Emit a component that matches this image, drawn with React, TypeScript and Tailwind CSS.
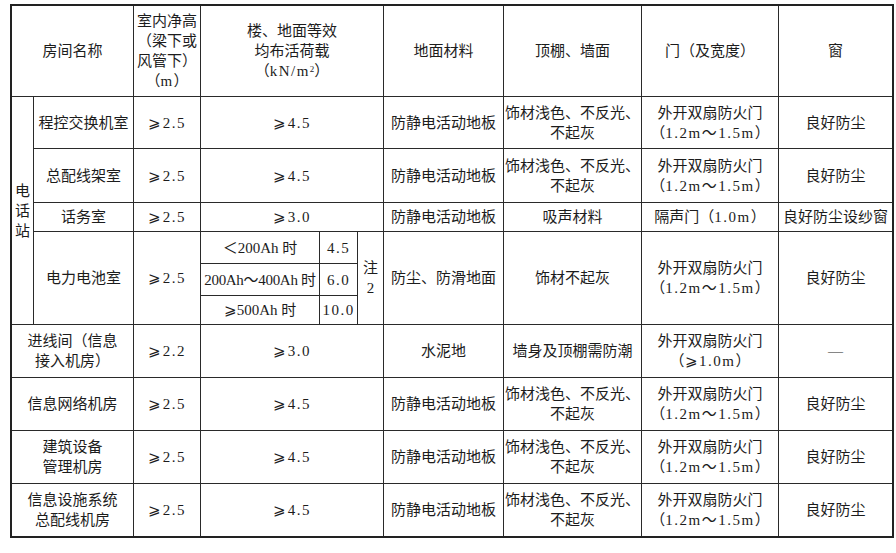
import type { ReactNode } from "react";

function Cell({ className = "", children }: { className?: string; children?: ReactNode }) {
  return (
    <div className={`flex items-center justify-center bg-white text-center leading-[20px] ${className}`}>
      <div>{children}</div>
    </div>
  );
}

// digits in the printed table are set wide, like "2. 5"
function Num({ children }: { children: ReactNode }) {
  return <span className="tracking-[1.5px]">{children}</span>;
}

const wall = (
  <>
    饰材浅色、不反光、
    <br />
    不起灰
  </>
);

const fireDoor = (
  <>
    外开双扇防火门
    <br />
    （<Num>1.2m～1.5m</Num>）
  </>
);

export default function App() {
  return (
    <div className="min-h-[553px] w-[896px] bg-white pl-[10px] pt-[4px] font-['Liberation_Serif','Noto_Sans_CJK_SC',serif] text-[15px] text-[#1c1c1c]">
      <div className="grid w-[884px] grid-cols-[21px_99px_66px_118px_37px_25px_119px_137px_136px_113px] grid-rows-[90px_51px_53px_28px_31px_31px_28px_52px_52px_52px_52px] gap-px border-2 border-[#222] bg-[#2a2a2a]">
        {/* header */}
        <Cell className="col-span-2">房间名称</Cell>
        <Cell>
          室内净高
          <br />
          （梁下或
          <br />
          风管下）
          <br />
          （<Num>m</Num>）
        </Cell>
        <Cell className="col-span-3">
          楼、地面等效
          <br />
          均布活荷载
          <br />
          （<Num>kN/m</Num>
          <sup className="text-[9px]">2</sup>）
        </Cell>
        <Cell>地面材料</Cell>
        <Cell>顶棚、墙面</Cell>
        <Cell>门（及宽度）</Cell>
        <Cell>窗</Cell>

        {/* 电话站 group */}
        <Cell className="row-span-6 leading-[18px]">
          电
          <br />
          话
          <br />
          站
        </Cell>
        <Cell>程控交换机室</Cell>
        <Cell><Num>⩾2.5</Num></Cell>
        <Cell className="col-span-3"><Num>⩾4.5</Num></Cell>
        <Cell>防静电活动地板</Cell>
        <Cell>{wall}</Cell>
        <Cell>{fireDoor}</Cell>
        <Cell>良好防尘</Cell>

        <Cell>总配线架室</Cell>
        <Cell><Num>⩾2.5</Num></Cell>
        <Cell className="col-span-3"><Num>⩾4.5</Num></Cell>
        <Cell>防静电活动地板</Cell>
        <Cell>{wall}</Cell>
        <Cell>{fireDoor}</Cell>
        <Cell>良好防尘</Cell>

        <Cell>话务室</Cell>
        <Cell><Num>⩾2.5</Num></Cell>
        <Cell className="col-span-3"><Num>⩾3.0</Num></Cell>
        <Cell>防静电活动地板</Cell>
        <Cell>吸声材料</Cell>
        <Cell>隔声门（<Num>1.0m</Num>）</Cell>
        <Cell className="whitespace-nowrap">良好防尘设纱窗</Cell>

        <Cell className="row-span-3">电力电池室</Cell>
        <Cell className="row-span-3"><Num>⩾2.5</Num></Cell>
        <Cell className="whitespace-nowrap">＜200Ah 时</Cell>
        <Cell><Num>4.5</Num></Cell>
        <Cell className="row-span-3">
          注
          <br />2
        </Cell>
        <Cell className="row-span-3">防尘、防滑地面</Cell>
        <Cell className="row-span-3">饰材不起灰</Cell>
        <Cell className="row-span-3">{fireDoor}</Cell>
        <Cell className="row-span-3">良好防尘</Cell>
        <Cell className="whitespace-nowrap tracking-[-0.3px]">200Ah～400Ah 时</Cell>
        <Cell><Num>6.0</Num></Cell>
        <Cell className="whitespace-nowrap">⩾500Ah 时</Cell>
        <Cell><Num>10.0</Num></Cell>

        {/* other rooms */}
        <Cell className="col-span-2">
          进线间（信息
          <br />
          接入机房）
        </Cell>
        <Cell><Num>⩾2.2</Num></Cell>
        <Cell className="col-span-3"><Num>⩾3.0</Num></Cell>
        <Cell>水泥地</Cell>
        <Cell>墙身及顶棚需防潮</Cell>
        <Cell>
          外开双扇防火门
          <br />
          （<Num>⩾1.0m</Num>）
        </Cell>
        <Cell>—</Cell>

        <Cell className="col-span-2">信息网络机房</Cell>
        <Cell><Num>⩾2.5</Num></Cell>
        <Cell className="col-span-3"><Num>⩾4.5</Num></Cell>
        <Cell>防静电活动地板</Cell>
        <Cell>{wall}</Cell>
        <Cell>{fireDoor}</Cell>
        <Cell>良好防尘</Cell>

        <Cell className="col-span-2">
          建筑设备
          <br />
          管理机房
        </Cell>
        <Cell><Num>⩾2.5</Num></Cell>
        <Cell className="col-span-3"><Num>⩾4.5</Num></Cell>
        <Cell>防静电活动地板</Cell>
        <Cell>{wall}</Cell>
        <Cell>{fireDoor}</Cell>
        <Cell>良好防尘</Cell>

        <Cell className="col-span-2">
          信息设施系统
          <br />
          总配线机房
        </Cell>
        <Cell><Num>⩾2.5</Num></Cell>
        <Cell className="col-span-3"><Num>⩾4.5</Num></Cell>
        <Cell>防静电活动地板</Cell>
        <Cell>{wall}</Cell>
        <Cell>{fireDoor}</Cell>
        <Cell>良好防尘</Cell>
      </div>
    </div>
  );
}
